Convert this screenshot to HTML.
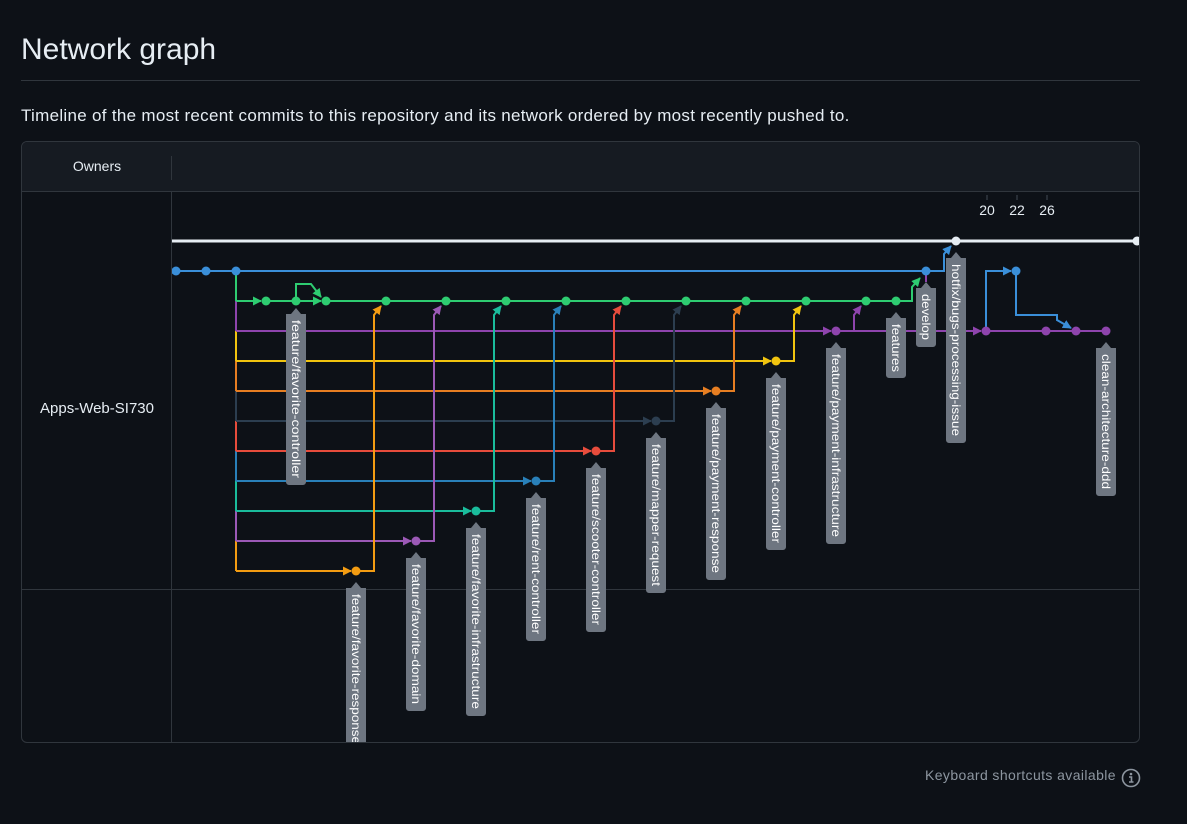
<!DOCTYPE html>
<html><head><meta charset="utf-8"><style>
html,body{margin:0;padding:0;background:#0d1117;width:1187px;height:824px;overflow:hidden;font-family:"Liberation Sans",Arial,sans-serif;color:#e6edf3}
h1{position:absolute;left:21px;top:33px;margin:0;font-weight:400;font-size:30px;color:#e6edf3}
.hr{position:absolute;left:21px;top:80px;width:1119px;height:1px;background:#30363d}
.sub{position:absolute;left:21px;top:106px;font-size:17px;letter-spacing:0.3px;color:#e6edf3}
.box{position:absolute;left:21px;top:141px;width:1117px;height:600px;border:1px solid #30363d;border-radius:6px;overflow:hidden}
.head{position:absolute;left:0;top:0;width:100%;height:49px;background:#161b22;border-bottom:1px solid #30363d}
.own{position:absolute;left:0;width:150px;top:16px;text-align:center;font-size:14px;color:#e6edf3}
.kb{position:absolute;left:925px;top:767px;font-size:14px;letter-spacing:0.4px;color:#8d96a0}
</style></head><body>
<h1>Network graph</h1>
<div class="hr"></div>
<div class="sub">Timeline of the most recent commits to this repository and its network ordered by most recently pushed to.</div>
<div class="box">
 <div class="head"><div class="own">Owners</div><div style="position:absolute;left:149px;top:14px;width:1px;height:24px;background:#30363d"></div></div>
 <div style="position:absolute;left:149px;top:50px;width:1px;height:560px;background:#30363d"></div>
 <div style="position:absolute;left:0;top:447px;width:100%;height:1px;background:#30363d"></div>
 <div style="position:absolute;left:0;width:150px;top:258px;text-align:center;font-size:15px;color:#e6edf3">Apps-Web-SI730</div>
</div>
<div class="kb">Keyboard shortcuts available</div>
<svg style="position:absolute;left:1120px;top:767px" width="22" height="22" viewBox="0 0 22 22"><circle cx="11" cy="11" r="8.5" fill="none" stroke="#8d96a0" stroke-width="1.6"/><circle cx="11" cy="7" r="1.3" fill="#8d96a0"/><path d="M9 10h2.5v5M9 15h4.5" stroke="#8d96a0" stroke-width="1.6" fill="none"/></svg>

<svg style="position:absolute;left:0;top:0" width="1187" height="824" viewBox="0 0 1187 824">
<defs>
<clipPath id="c"><rect x="172" y="192" width="967" height="550"/></clipPath>
<marker id="mb" viewBox="0 0 10 10" refX="9" refY="5" markerWidth="9" markerHeight="9" markerUnits="userSpaceOnUse" orient="auto"><path d="M0,0L10,5L0,10z" fill="#3a8fd9"/></marker>
<marker id="mg" viewBox="0 0 10 10" refX="9" refY="5" markerWidth="9" markerHeight="9" markerUnits="userSpaceOnUse" orient="auto"><path d="M0,0L10,5L0,10z" fill="#2ecc71"/></marker>
<marker id="mp" viewBox="0 0 10 10" refX="9" refY="5" markerWidth="9" markerHeight="9" markerUnits="userSpaceOnUse" orient="auto"><path d="M0,0L10,5L0,10z" fill="#8e44ad"/></marker>
<marker id="my" viewBox="0 0 10 10" refX="9" refY="5" markerWidth="9" markerHeight="9" markerUnits="userSpaceOnUse" orient="auto"><path d="M0,0L10,5L0,10z" fill="#f1c40f"/></marker>
<marker id="mo" viewBox="0 0 10 10" refX="9" refY="5" markerWidth="9" markerHeight="9" markerUnits="userSpaceOnUse" orient="auto"><path d="M0,0L10,5L0,10z" fill="#e67e22"/></marker>
<marker id="ms" viewBox="0 0 10 10" refX="9" refY="5" markerWidth="9" markerHeight="9" markerUnits="userSpaceOnUse" orient="auto"><path d="M0,0L10,5L0,10z" fill="#2c3e50"/></marker>
<marker id="mr" viewBox="0 0 10 10" refX="9" refY="5" markerWidth="9" markerHeight="9" markerUnits="userSpaceOnUse" orient="auto"><path d="M0,0L10,5L0,10z" fill="#e74c3c"/></marker>
<marker id="mb2" viewBox="0 0 10 10" refX="9" refY="5" markerWidth="9" markerHeight="9" markerUnits="userSpaceOnUse" orient="auto"><path d="M0,0L10,5L0,10z" fill="#2980b9"/></marker>
<marker id="mt" viewBox="0 0 10 10" refX="9" refY="5" markerWidth="9" markerHeight="9" markerUnits="userSpaceOnUse" orient="auto"><path d="M0,0L10,5L0,10z" fill="#1abc9c"/></marker>
<marker id="mp2" viewBox="0 0 10 10" refX="9" refY="5" markerWidth="9" markerHeight="9" markerUnits="userSpaceOnUse" orient="auto"><path d="M0,0L10,5L0,10z" fill="#9b59b6"/></marker>
<marker id="mf" viewBox="0 0 10 10" refX="9" refY="5" markerWidth="9" markerHeight="9" markerUnits="userSpaceOnUse" orient="auto"><path d="M0,0L10,5L0,10z" fill="#f39c12"/></marker>
</defs>
<g clip-path="url(#c)" fill="none" stroke-width="2">
<g stroke="#444c56" stroke-width="1"><path d="M987 195v5M1017 195v5M1047 195v5"/></g>
<g font-size="14" fill="#e6edf3" stroke="none" text-anchor="middle"><text x="987" y="215">20</text><text x="1017" y="215">22</text><text x="1047" y="215">26</text></g>
<path d="M172 241H1137" stroke="#e6edf3" stroke-width="3"/>
<path d="M236 271V301" stroke="#2ecc71"/>
<path d="M236 301V331" stroke="#8e44ad"/>
<path d="M236 331V361" stroke="#f1c40f"/>
<path d="M236 361V391" stroke="#e67e22"/>
<path d="M236 391V421" stroke="#2c3e50"/>
<path d="M236 421V451" stroke="#e74c3c"/>
<path d="M236 451V481" stroke="#2980b9"/>
<path d="M236 481V511" stroke="#1abc9c"/>
<path d="M236 511V541" stroke="#9b59b6"/>
<path d="M236 541V571" stroke="#f39c12"/>
<path d="M236 331H831" stroke="#8e44ad" marker-end="url(#mp)"/>
<path d="M836 331H981" stroke="#8e44ad" marker-end="url(#mp)"/>
<path d="M986 331H1106" stroke="#8e44ad"/>
<path d="M836 331H854V315L861 306" stroke="#8e44ad" marker-end="url(#mp)"/>
<path d="M236 361H771" stroke="#f1c40f" marker-end="url(#my)"/>
<path d="M776 361H794V315L801 306" stroke="#f1c40f" marker-end="url(#my)"/>
<path d="M236 391H711" stroke="#e67e22" marker-end="url(#mo)"/>
<path d="M716 391H734V315L741 306" stroke="#e67e22" marker-end="url(#mo)"/>
<path d="M236 421H651" stroke="#2c3e50" marker-end="url(#ms)"/>
<path d="M656 421H674V315L681 306" stroke="#2c3e50" marker-end="url(#ms)"/>
<path d="M236 451H591" stroke="#e74c3c" marker-end="url(#mr)"/>
<path d="M596 451H614V315L621 306" stroke="#e74c3c" marker-end="url(#mr)"/>
<path d="M236 481H531" stroke="#2980b9" marker-end="url(#mb2)"/>
<path d="M536 481H554V315L561 306" stroke="#2980b9" marker-end="url(#mb2)"/>
<path d="M236 511H471" stroke="#1abc9c" marker-end="url(#mt)"/>
<path d="M476 511H494V315L501 306" stroke="#1abc9c" marker-end="url(#mt)"/>
<path d="M236 541H411" stroke="#9b59b6" marker-end="url(#mp2)"/>
<path d="M416 541H434V315L441 306" stroke="#9b59b6" marker-end="url(#mp2)"/>
<path d="M236 571H351" stroke="#f39c12" marker-end="url(#mf)"/>
<path d="M356 571H374V315L381 306" stroke="#f39c12" marker-end="url(#mf)"/>
<path d="M236 301H261" stroke="#2ecc71" marker-end="url(#mg)"/>
<path d="M266 301H321" stroke="#2ecc71" marker-end="url(#mg)"/>
<path d="M296 301V284H311L321 297" stroke="#2ecc71" marker-end="url(#mg)"/>
<path d="M326 301H896H912V287L920 278" stroke="#2ecc71" marker-end="url(#mg)"/>
<path d="M172 271H926" stroke="#3a8fd9"/>
<path d="M926 271H944V254L951 246" stroke="#3a8fd9" marker-end="url(#mb)"/>
<path d="M986 331V271H1011" stroke="#3a8fd9" marker-end="url(#mb)"/>
<path d="M1016 271V315H1057V320L1071 328" stroke="#3a8fd9" marker-end="url(#mb)"/>
<path d="M926 271V282" stroke="#8e44ad"/>
<g stroke="none">
<g fill="#3a8fd9"><circle cx="176" cy="271" r="4.5"/><circle cx="206" cy="271" r="4.5"/><circle cx="236" cy="271" r="4.5"/><circle cx="926" cy="271" r="4.5"/><circle cx="1016" cy="271" r="4.5"/></g>
<g fill="#2ecc71"><circle cx="266" cy="301" r="4.5"/><circle cx="296" cy="301" r="4.5"/><circle cx="326" cy="301" r="4.5"/><circle cx="386" cy="301" r="4.5"/><circle cx="446" cy="301" r="4.5"/><circle cx="506" cy="301" r="4.5"/><circle cx="566" cy="301" r="4.5"/><circle cx="626" cy="301" r="4.5"/><circle cx="686" cy="301" r="4.5"/><circle cx="746" cy="301" r="4.5"/><circle cx="806" cy="301" r="4.5"/><circle cx="866" cy="301" r="4.5"/><circle cx="896" cy="301" r="4.5"/></g>
<g fill="#8e44ad"><circle cx="836" cy="331" r="4.5"/><circle cx="986" cy="331" r="4.5"/><circle cx="1046" cy="331" r="4.5"/><circle cx="1076" cy="331" r="4.5"/><circle cx="1106" cy="331" r="4.5"/></g>
<circle cx="776" cy="361" r="4.5" fill="#f1c40f"/>
<circle cx="716" cy="391" r="4.5" fill="#e67e22"/>
<circle cx="656" cy="421" r="4.5" fill="#2c3e50"/>
<circle cx="596" cy="451" r="4.5" fill="#e74c3c"/>
<circle cx="536" cy="481" r="4.5" fill="#2980b9"/>
<circle cx="476" cy="511" r="4.5" fill="#1abc9c"/>
<circle cx="416" cy="541" r="4.5" fill="#9b59b6"/>
<circle cx="356" cy="571" r="4.5" fill="#f39c12"/>
<circle cx="956" cy="241" r="4.5" fill="#e6edf3"/><circle cx="1137" cy="241" r="4.5" fill="#e6edf3"/>
</g>
<g stroke="none" fill="#6e7681">
<path d="M286 314h20v168a3 3 0 0 1-3 3h-14a3 3 0 0 1-3-3zM291 314l5-6 5 6z"/>
<path d="M346 588h20v160h-20zM351 588l5-6 5 6z"/>
<path d="M406 558h20v150a3 3 0 0 1-3 3h-14a3 3 0 0 1-3-3zM411 558l5-6 5 6z"/>
<path d="M466 528h20v185a3 3 0 0 1-3 3h-14a3 3 0 0 1-3-3zM471 528l5-6 5 6z"/>
<path d="M526 498h20v140a3 3 0 0 1-3 3h-14a3 3 0 0 1-3-3zM531 498l5-6 5 6z"/>
<path d="M586 468h20v161a3 3 0 0 1-3 3h-14a3 3 0 0 1-3-3zM591 468l5-6 5 6z"/>
<path d="M646 438h20v152a3 3 0 0 1-3 3h-14a3 3 0 0 1-3-3zM651 438l5-6 5 6z"/>
<path d="M706 408h20v169a3 3 0 0 1-3 3h-14a3 3 0 0 1-3-3zM711 408l5-6 5 6z"/>
<path d="M766 378h20v169a3 3 0 0 1-3 3h-14a3 3 0 0 1-3-3zM771 378l5-6 5 6z"/>
<path d="M826 348h20v193a3 3 0 0 1-3 3h-14a3 3 0 0 1-3-3zM831 348l5-6 5 6z"/>
<path d="M886 318h20v57a3 3 0 0 1-3 3h-14a3 3 0 0 1-3-3zM891 318l5-6 5 6z"/>
<path d="M916 288h20v56a3 3 0 0 1-3 3h-14a3 3 0 0 1-3-3zM921 288l5-6 5 6z"/>
<path d="M946 258h20v182a3 3 0 0 1-3 3h-14a3 3 0 0 1-3-3zM951 258l5-6 5 6z"/>
<path d="M1096 348h20v145a3 3 0 0 1-3 3h-14a3 3 0 0 1-3-3zM1101 348l5-6 5 6z"/>
</g>
<g stroke="none" fill="#ffffff" font-size="12">
<text transform="translate(292,320) rotate(90)" textLength="158" lengthAdjust="spacingAndGlyphs">feature/favorite-controller</text>
<text transform="translate(352,594) rotate(90)" textLength="150" lengthAdjust="spacingAndGlyphs">feature/favorite-response</text>
<text transform="translate(412,564) rotate(90)" textLength="140" lengthAdjust="spacingAndGlyphs">feature/favorite-domain</text>
<text transform="translate(472,534) rotate(90)" textLength="175" lengthAdjust="spacingAndGlyphs">feature/favorite-infrastructure</text>
<text transform="translate(532,504) rotate(90)" textLength="130" lengthAdjust="spacingAndGlyphs">feature/rent-controller</text>
<text transform="translate(592,474) rotate(90)" textLength="151" lengthAdjust="spacingAndGlyphs">feature/scooter-controller</text>
<text transform="translate(652,444) rotate(90)" textLength="142" lengthAdjust="spacingAndGlyphs">feature/mapper-request</text>
<text transform="translate(712,414) rotate(90)" textLength="159" lengthAdjust="spacingAndGlyphs">feature/payment-response</text>
<text transform="translate(772,384) rotate(90)" textLength="159" lengthAdjust="spacingAndGlyphs">feature/payment-controller</text>
<text transform="translate(832,354) rotate(90)" textLength="183" lengthAdjust="spacingAndGlyphs">feature/payment-infrastructure</text>
<text transform="translate(892,324) rotate(90)" textLength="48" lengthAdjust="spacingAndGlyphs">features</text>
<text transform="translate(922,294) rotate(90)" textLength="46" lengthAdjust="spacingAndGlyphs">develop</text>
<text transform="translate(952,264) rotate(90)" textLength="172" lengthAdjust="spacingAndGlyphs">hotfix/bugs-processing-issue</text>
<text transform="translate(1102,354) rotate(90)" textLength="135" lengthAdjust="spacingAndGlyphs">clean-architecture-ddd</text>
</g>
</g>
</svg>
</body></html>
